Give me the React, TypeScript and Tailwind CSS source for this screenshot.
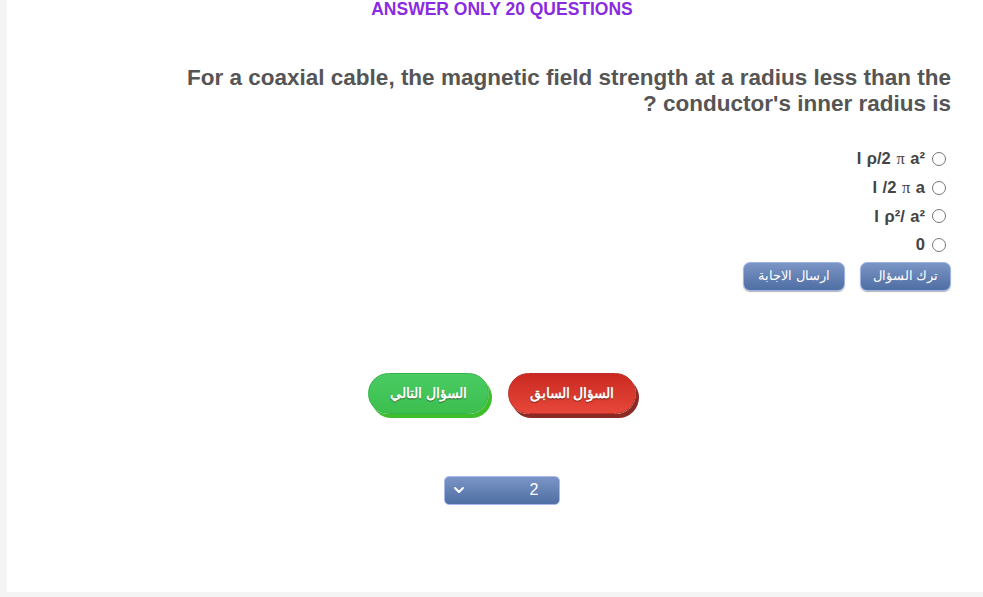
import { ChevronDown } from 'lucide-react'

const options = ['I ρ/2 π a²', 'I /2 π a', 'I ρ²/ a²', '0']

// the π in the source renders in a serif fallback
function Opt({ text }: { text: string }) {
  const parts = text.split('π')
  return (
    <span dir="ltr">
      {parts.map((p, i) => (
        <span key={i}>
          {i > 0 && <span className="font-['Liberation_Serif',serif] font-normal">π</span>}
          {p}
        </span>
      ))}
    </span>
  )
}

export default function App() {
  return (
    <div className="h-[597px] w-[983px] bg-[#f4f4f4] pl-[7px] pb-[5px] font-['Liberation_Sans',Arial,sans-serif]">
      <div className="flex h-[592px] flex-col bg-white">
        <p className="pl-[14px] text-center text-[17.5px] font-bold leading-[18px] text-[#8a2be2]">
          ANSWER ONLY 20 QUESTIONS
        </p>

        <div dir="rtl" className="pr-[32px] pt-[46px]">
          <h2 className="mt-[1px] w-[790px] text-[22.5px] font-bold leading-[26px] text-[#555]">
            For a coaxial cable, the magnetic field strength at a radius less than the conductor's inner radius is ?
          </h2>

          <div className="mt-[32px] flex flex-col gap-[8.5px] pr-[5px]">
            {options.map((o) => (
              <label key={o} className="flex h-[20px] items-center gap-[7px] text-[16.5px] font-bold text-[#444] [word-spacing:1px]">
                <span className="h-[14px] w-[14px] rounded-full border border-[#767676] bg-white" />
                <Opt text={o} />
              </label>
            ))}
          </div>

          <div className="mt-[7px] flex gap-[15px]">
            <button className="h-[29px] w-[91px] rounded-[7px] border border-[#9fb3e6] bg-gradient-to-b from-[#7b95c6] to-[#4f6ea3] text-[13px] text-white shadow-[0_1px_1px_rgba(0,0,0,0.3)]">
              ترك السؤال
            </button>
            <button className="h-[29px] w-[102px] rounded-[7px] border border-[#9fb3e6] bg-gradient-to-b from-[#7b95c6] to-[#4f6ea3] text-[13px] text-white shadow-[0_1px_1px_rgba(0,0,0,0.3)]">
              ارسال الاجابة
            </button>
          </div>
        </div>

        <div className="mt-[82px] flex justify-center gap-[19px] pl-[14px]">
          <button className="h-[41px] w-[121px] rounded-full border border-[#34b34a] bg-gradient-to-b from-[#49cb63] to-[#3cbf4e] text-[14px] font-bold text-white shadow-[3px_4px_0_#3fbe2c] [text-shadow:0_1px_1px_rgba(0,0,0,0.45)]">
            السؤال التالي
          </button>
          <button className="h-[41px] w-[128px] rounded-full border border-[#c0302a] bg-gradient-to-b from-[#c9291f] to-[#e8473a] text-[14px] font-bold text-white shadow-[3px_4px_0_#8b2a22] [text-shadow:0_1px_1px_rgba(0,0,0,0.45)]">
            السؤال السابق
          </button>
        </div>

        <div className="mt-[62px] flex justify-center pl-[13px]">
          <div className="flex h-[29px] w-[116px] items-center justify-between rounded-[5px] border border-[#a9b9ef] bg-gradient-to-b from-[#7b95c6] to-[#4f6ea3] pl-[6px] pr-[20px] text-[16px] text-white">
            <ChevronDown size={16} strokeWidth={3} />
            <span>2</span>
          </div>
        </div>
      </div>
    </div>
  )
}
